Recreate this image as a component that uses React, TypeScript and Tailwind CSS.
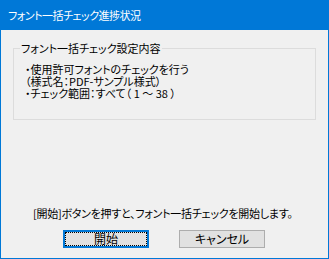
const FONT = "[font-family:'Noto_Sans_CJK_JP','Noto_Sans',sans-serif] [font-feature-settings:'palt']";

function DialogButton({ label, primary }: { label: string; primary?: boolean }) {
  return (
    <button
      type="button"
      className={
        primary
          ? "flex h-[18px] w-[86px] items-center justify-center border-2 border-[#0078d7] bg-[#e1e1e1] p-0 outline-1 outline-dotted outline-black -outline-offset-3 text-[12px] leading-none text-black"
          : "flex h-[18px] w-[86px] items-center justify-center border border-[#adadad] bg-[#e1e1e1] p-0 text-[12px] leading-none text-black"
      }
    >
      {label}
    </button>
  );
}

export default function App() {
  return (
    <div className={`flex h-[259px] w-[329px] flex-col border border-[#0078d7] bg-[#f0f0f0] text-black ${FONT}`}>
      <div className="flex h-[29px] shrink-0 items-center bg-[#0078d7] pl-[7px] text-[11px] tracking-[-0.5px] text-white">
        フォント一括チェック進捗状況
      </div>
      <div className="flex flex-1 flex-col px-[12px]">
        <fieldset className="mt-[12px] h-[78px] border border-[#dcdcdc]">
          <legend className="ml-[6px] px-[1px] text-[11px] leading-[13px]">フォント一括チェック設定内容</legend>
          <div className="mt-[8px] pl-[11px] text-[11px] leading-[12px]">
            <div>・使用許可フォントのチェックを行う</div>
            <div>（様式名：PDF-サンプル様式）</div>
            <div>・チェック範囲：すべて（ 1 ～ 38 ）</div>
          </div>
        </fieldset>
        <div className="mt-auto pl-[20px] text-[11px] leading-[12px] tracking-[-0.25px] whitespace-nowrap">
          [開始]ボタンを押すと、フォント一括チェックを開始します。
        </div>
        <div className="mt-[11px] mb-[10px] flex gap-[30px] pl-[50px]">
          <DialogButton label="開始" primary />
          <DialogButton label="キャンセル" />
        </div>
      </div>
    </div>
  );
}
